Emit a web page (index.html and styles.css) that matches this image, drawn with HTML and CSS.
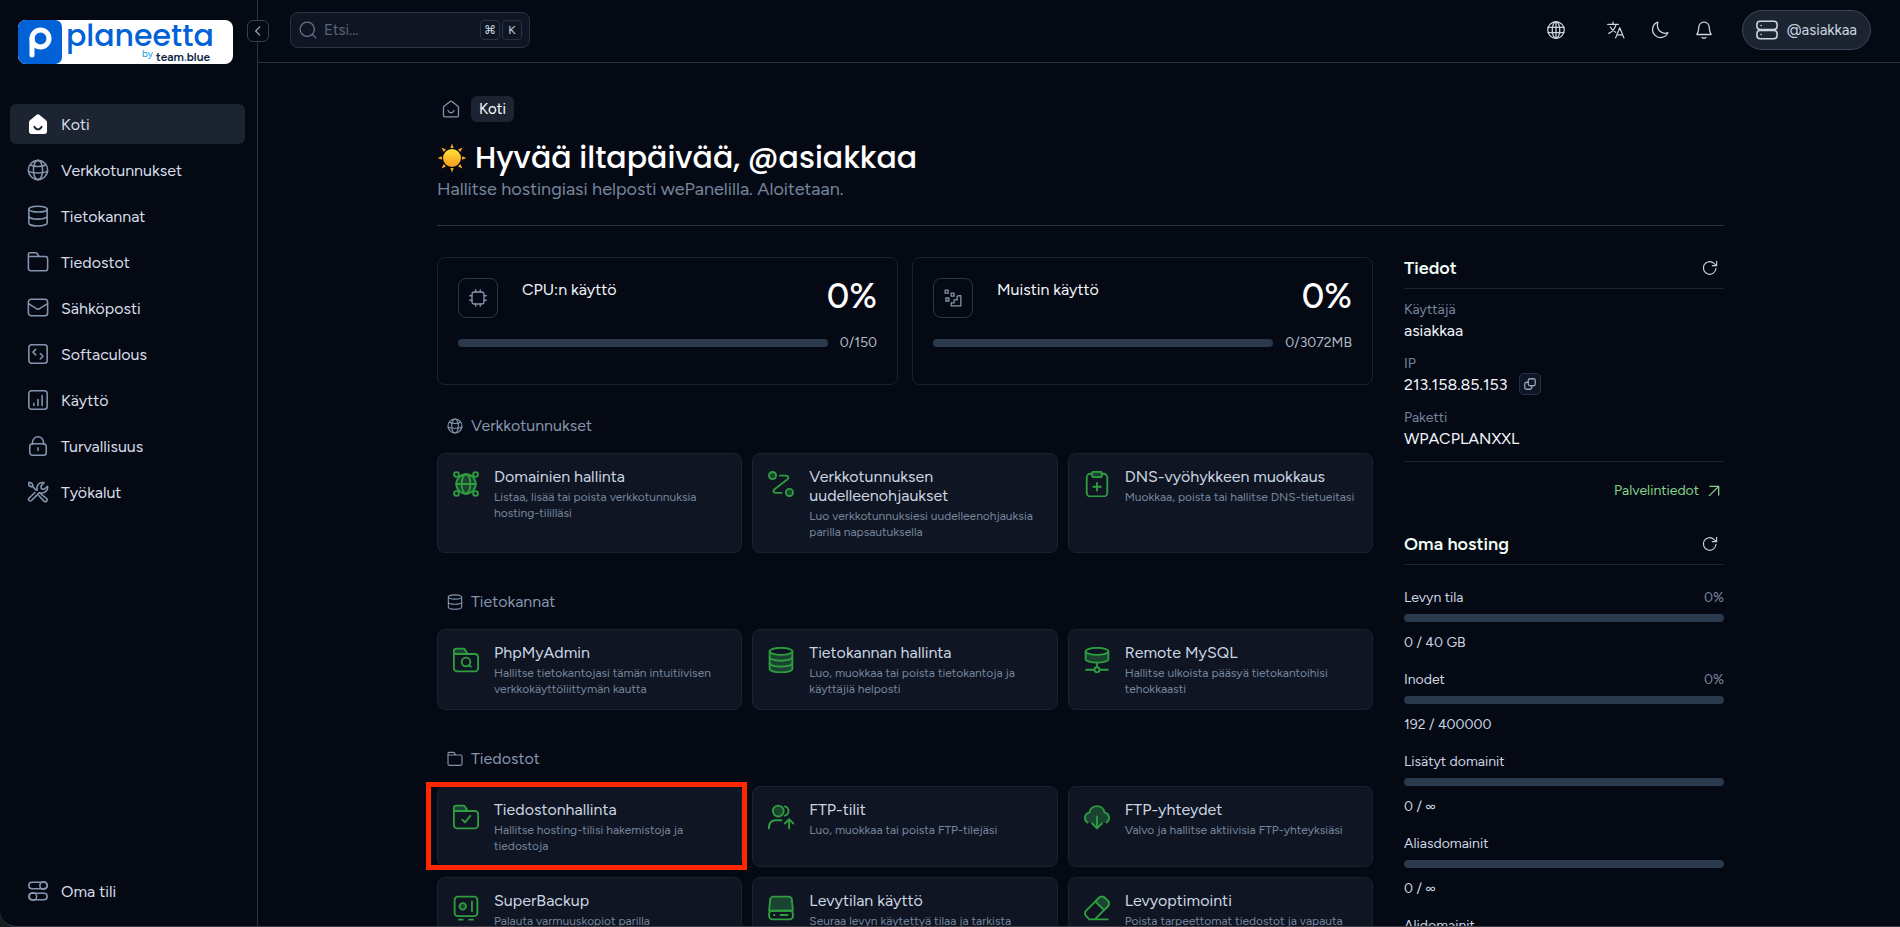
FILE: index.html
```html
<!DOCTYPE html>
<html lang="fi">
<head>
    <meta charset="UTF-8">
    <meta name="viewport" content="width=device-width, initial-scale=1.0">
    <title>Koti - wePanel</title>
    <link rel="stylesheet" href="styles.css">
</head>
<body>

<!-- Kuvakkeet -->
<svg class="sprite" aria-hidden="true">
    <symbol id="i-home" viewBox="0 0 24 24"><path d="M2 10a2 2 0 0 1 .8-1.600l8-6.400a2 2 0 0 1 2.400 0l8 6.400a2 2 0 0 1 .8 1.600V20.500a2 2 0 0 1-2 2H4a2 2 0 0 1-2-2z"/><path d="M8 14c1 2.200 2.500 3 4 3s3-.8 4-3"/></symbol>
    <symbol id="i-home-fill" viewBox="0 0 24 24"><path fill="#fff" stroke="#fff" d="M3 10.200a2 2 0 0 1 .8-1.600l7-5.800a2 2 0 0 1 2.400 0l7 5.800a2 2 0 0 1 .8 1.600V20a2 2 0 0 1-2 2H5a2 2 0 0 1-2-2z"/><path stroke="#1c2431" stroke-width="2" d="M8 15c1 2 2.500 2.800 4 2.800s3-.8 4-2.800"/></symbol>
    <symbol id="i-globe" viewBox="0 0 24 24"><circle cx="12" cy="12" r="10.500"/><ellipse cx="12" cy="12" rx="5" ry="10.500"/><path d="M1.500 13.500c5 2.500 16 2.500 21 0M3.500 6.500c4.500 2.300 12.500 2.300 17 0"/></symbol>
    <symbol id="i-globe2" viewBox="0 0 24 24"><circle cx="12" cy="12" r="11"/><ellipse cx="12" cy="12" rx="5" ry="11"/><path d="M1.500 8.500h21M1.500 15.500h21M12 1v22"/></symbol>
    <symbol id="i-db" viewBox="0 0 24 24"><ellipse cx="12" cy="4.500" rx="10" ry="3.200"/><path d="M2 4.500v15c0 1.900 4.500 3.400 10 3.400s10-1.500 10-3.400v-15M2 12c0 1.900 4.500 3.400 10 3.400S22 13.900 22 12"/></symbol>
    <symbol id="i-folder" viewBox="0 0 24 24"><path d="M1.500 6V3.500a1.500 1.500 0 0 1 1.500-1.500h6.500a2 2 0 0 1 1.600.8L13.200 6H20a2.500 2.500 0 0 1 2.500 2.500v10.500a2.500 2.500 0 0 1-2.500 2.500H4A2.500 2.500 0 0 1 1.500 19zM1.500 6h12"/></symbol>
    <symbol id="i-mail" viewBox="0 0 24 24"><rect x="1.500" y="2.500" width="21" height="18" rx="3"/><path d="M2 7.500l8.300 5.100a3 3 0 0 0 3.400 0L22 7.500"/></symbol>
    <symbol id="i-code" viewBox="0 0 24 24"><rect x="2" y="2" width="20" height="20" rx="3"/><path d="M9.500 7l-3 3 3 3M14.500 11.500l3 3-3 3"/></symbol>
    <symbol id="i-chart" viewBox="0 0 24 24"><rect x="2" y="2" width="20" height="20" rx="3"/><path d="M7.500 15.500v2.500M12 11.500v6.500M16.500 7v11"/></symbol>
    <symbol id="i-lock" viewBox="0 0 24 24"><path d="M6 10V8a6 6 0 0 1 12 0v2"/><rect x="3" y="9.500" width="18" height="12.500" rx="3"/><path d="M12 14v3"/></symbol>
    <symbol id="i-tools" viewBox="0 0 24 24"><path d="M8.500 12.500l-6.300 6.300a1.900 1.900 0 0 0 0 2.500 1.900 1.900 0 0 0 2.700 0l8.600-8.600c3 .9 5.800.2 7.500-1.700a6 6 0 0 0 1.400-5.200l-3.700 3.200-3-.4-.5-3L18.600 2c-2.200-.8-4.600-.2-6.200 1.500-1.600 1.700-2 3.700-1.200 6.200"/><path d="M15 14l6.500 5.300a2 2 0 0 1-2.700 2.900L13 16M10 10L6.300 6.300"/><path d="M2 1.500l3 .6 1.500 3-1.500 1.400-3-1.600z"/></symbol>
    <symbol id="i-toggles" viewBox="0 0 24 24"><rect x="2" y="2.500" width="20" height="7" rx="3.500"/><circle cx="18" cy="6" r="4"/><rect x="2" y="14.500" width="20" height="7" rx="3.500"/><circle cx="6.500" cy="18" r="4"/></symbol>
    <symbol id="i-search" viewBox="0 0 24 24"><circle cx="11" cy="11" r="9.500"/><path d="M18 18l4.500 4.500"/></symbol>
    <symbol id="i-left" viewBox="0 0 24 24"><path d="M15 5l-7 7 7 7"/></symbol>
    <symbol id="i-lang" viewBox="0 0 24 24"><path d="M1 4.500h14M8 1.500v3M12 4.500c-1 5-4.500 9.500-9.500 12M4.500 8c1.500 3 4 5.500 7 7M11.500 22.500l5.500-13.500 5.500 13.500M13.300 18.500h7.400"/></symbol>
    <symbol id="i-moon" viewBox="0 0 24 24"><path d="M9 1.500a10.600 10.600 0 1 0 13.500 14C15 18.500 6.500 12.500 9 1.500z"/></symbol>
    <symbol id="i-bell" viewBox="0 0 24 24"><path d="M5 8.500a7 7 0 0 1 14 0c0 5 1.500 7.500 2.500 9.500h-19C3.500 16 5 13.500 5 8.500zM9.500 22c1.500 1.300 3.500 1.300 5 0"/></symbol>
    <symbol id="i-server" viewBox="0 0 24 24"><rect x="1" y="2.500" width="22" height="9" rx="3.500"/><rect x="1" y="12.500" width="22" height="9" rx="3.500"/><path d="M5.500 7h.2M5.500 17h.2"/></symbol>
    <symbol id="i-cpu" viewBox="0 0 24 24"><rect x="4" y="4" width="16" height="16" rx="3"/><path d="M9 1v3M15 1v3M9 20v3M15 20v3M1 9h3M1 15h3M20 9h3M20 15h3"/></symbol>
    <symbol id="i-mem" viewBox="0 0 24 24"><path d="M1.500 1.500h4v4h-4zM9.500 5.500h4v4h-4zM2.500 12h4v4h-4zM9.500 22.500v-4h4v-4h4v-5l2-.5h3v13.500z"/></symbol>
    <symbol id="i-refresh" viewBox="0 0 24 24"><path d="M21 12.500a9.500 9.500 0 1 1-3-7.500l3.500 3M22 2v6.500h-6.500"/></symbol>
    <symbol id="i-copy" viewBox="0 0 24 24"><rect x="9" y="3" width="12" height="12" rx="3"/><path d="M9 9H6a3 3 0 0 0-3 3v6a3 3 0 0 0 3 3h6a3 3 0 0 0 3-3v-3"/></symbol>
    <symbol id="i-arrow" viewBox="0 0 24 24"><path d="M4 20L20 4M5 4h15v15"/></symbol>

    <symbol id="g-domain" viewBox="0 0 24 24"><circle class="tint" cx="12" cy="12" r="9"/><ellipse cx="12" cy="12" rx="4" ry="9"/><path d="M3 12h18"/><circle class="hole" cx="3.200" cy="3.200" r="2.200"/><circle class="hole" cx="20.800" cy="3.200" r="2.200"/><circle class="hole" cx="3.200" cy="20.800" r="2.200"/><circle class="hole" cx="20.800" cy="20.800" r="2.200"/></symbol>
    <symbol id="g-route" viewBox="0 0 24 24"><circle class="tint" cx="4.200" cy="4.200" r="3.300"/><circle class="tint" cx="19.800" cy="19.800" r="3.300"/><path d="M11 4.200h5.500c2.500 0 3 2.200 1.300 3.600L6 16.800c-1.700 1.400-1.200 3.400 1 3.400h5.500"/></symbol>
    <symbol id="g-clip" viewBox="0 0 24 24"><rect x="2.500" y="2.500" width="19" height="21" rx="3.500"/><rect class="tint" x="7.500" y=".7" width="9" height="5" rx="1.500"/><path d="M12 11v7M8.500 14.500h7"/></symbol>
    <symbol id="g-pma" viewBox="0 0 24 24"><path d="M.8 6.500v13a3 3 0 0 0 3 3h16.400a3 3 0 0 0 3-3v-10a3 3 0 0 0-3-3z"/><path class="tint" d="M.8 6.500v-3a2 2 0 0 1 2-2h6.500a2 2 0 0 1 1.700.9l2.500 4.100z"/><circle cx="12" cy="13.800" r="4"/><path d="M15 16.800l1.500 1.500"/></symbol>
    <symbol id="g-db" viewBox="0 0 24 24"><path class="tint" d="M1.500 4v16c0 1.900 4.500 3.400 10.500 3.400S22.500 21.900 22.500 20V4"/><ellipse class="hole" cx="12" cy="4" rx="10.500" ry="3.200"/><path d="M1.500 9.300c0 1.900 4.500 3.400 10.500 3.400s10.500-1.500 10.500-3.400M1.500 14.700c0 1.900 4.500 3.400 10.500 3.400s10.500-1.500 10.500-3.400"/></symbol>
    <symbol id="g-remote" viewBox="0 0 24 24"><path class="tint" d="M1.500 4v7c0 1.900 4.500 3.400 10.500 3.400s10.500-1.500 10.500-3.400V4"/><ellipse class="hole" cx="12" cy="4" rx="10.500" ry="3.200"/><path d="M12 14.500v4M2 21h7.500M14.500 21H22"/><circle cx="12" cy="21" r="2.300"/></symbol>
    <symbol id="g-files" viewBox="0 0 24 24"><path d="M.8 6.500v13a3 3 0 0 0 3 3h16.400a3 3 0 0 0 3-3v-10a3 3 0 0 0-3-3z"/><path class="tint" d="M.8 6.500v-3a2 2 0 0 1 2-2h6.500a2 2 0 0 1 1.700.9l2.500 4.100z"/><path d="M8.500 14.500l2.500 2.500 5-6"/></symbol>
    <symbol id="g-users" viewBox="0 0 24 24"><circle class="tint" cx="9.500" cy="6.500" r="5"/><path d="M15.500 2.200c4.500 1 4.500 7.600 0 8.600M.8 22.500c0-5 1.500-7.500 6.200-7.500h5.500M19.500 22.500v-7.500M15.500 18l4-4 4 4"/></symbol>
    <symbol id="g-cloud" viewBox="0 0 24 24"><path class="tint" d="M3 17C-.5 14.500.5 8.500 5 8c1-8 13-8 14 0 4.500.5 5.500 6.500 2 9l-5 1-4 4.500L8 18z" stroke="none"/><path d="M3 17C-.5 14.500.5 8.500 5 8c1-8 13-8 14 0 4.500.5 5.500 6.500 2 9M12 11.500v11M7.500 18l4.500 4.500 4.500-4.500"/></symbol>
    <symbol id="g-safe" viewBox="0 0 24 24"><rect x="1.500" y="1.500" width="21" height="18" rx="3"/><circle class="tint" cx="9" cy="10.500" r="3"/><path d="M17.500 6v9M5.500 22.800h3.500M15 22.800h3.500"/></symbol>
    <symbol id="g-disk" viewBox="0 0 24 24"><path class="tint" d="M1 14.500L2 4.500a3 3 0 0 1 3-3h14a3 3 0 0 1 3 3l1 10z"/><rect x="1" y="14.500" width="22" height="8" rx="3"/><path d="M5.500 18.500h.5M11.500 18.500h6.500"/></symbol>
    <symbol id="g-eraser" viewBox="0 0 24 24"><path d="M5 22.500l-3-3a3.500 3.500 0 0 1 0-5L14 2.500a3.500 3.500 0 0 1 5 0l3 3a3.500 3.500 0 0 1 0 5L10 22.500zM5 22.500h17"/><path class="tint" d="M10.500 6L14 2.500a3.500 3.500 0 0 1 5 0l3 3a3.500 3.500 0 0 1 0 5L18.500 14z"/></symbol>
</svg>

<div class="app">

    <aside class="sidebar">
        <a class="logo" href="#" aria-label="planeetta by team.blue">
            <svg viewBox="0 0 215 44" width="215" height="44">
                <rect width="44" height="44" rx="7" fill="#0062d6"/>
                <circle cx="22.500" cy="18.500" r="8.500" fill="none" stroke="#fff" stroke-width="5"/>
                <path d="M14 18v17" stroke="#fff" stroke-width="5" stroke-linecap="round"/>
                <text class="logo-name" x="48" y="26">planeetta</text>
                <text class="logo-by" x="124" y="37">by</text>
                <text class="logo-team" x="138" y="41">team<tspan fill="#00a0e0">.</tspan>blue</text>
            </svg>
        </a>
        <button class="collapse" type="button" aria-label="Pienennä valikko"><svg class="icon icon-xs"><use href="#i-left"/></svg></button>

        <nav class="menu">
            <a class="menu-item active" href="#"><svg class="icon"><use href="#i-home-fill"/></svg>Koti</a>
            <a class="menu-item" href="#"><svg class="icon"><use href="#i-globe"/></svg>Verkkotunnukset</a>
            <a class="menu-item" href="#"><svg class="icon"><use href="#i-db"/></svg>Tietokannat</a>
            <a class="menu-item" href="#"><svg class="icon"><use href="#i-folder"/></svg>Tiedostot</a>
            <a class="menu-item" href="#"><svg class="icon"><use href="#i-mail"/></svg>Sähköposti</a>
            <a class="menu-item" href="#"><svg class="icon"><use href="#i-code"/></svg>Softaculous</a>
            <a class="menu-item" href="#"><svg class="icon"><use href="#i-chart"/></svg>Käyttö</a>
            <a class="menu-item" href="#"><svg class="icon"><use href="#i-lock"/></svg>Turvallisuus</a>
            <a class="menu-item" href="#"><svg class="icon"><use href="#i-tools"/></svg>Työkalut</a>
            <a class="menu-item account" href="#"><svg class="icon"><use href="#i-toggles"/></svg>Oma tili</a>
        </nav>
    </aside>

    <div class="page">
        <header class="topbar">
            <label class="search">
                <svg class="icon icon-md"><use href="#i-search"/></svg>
                <input type="text" placeholder="Etsi..." aria-label="Etsi">
                <kbd>⌘</kbd><kbd>K</kbd>
            </label>
            <div class="actions">
                <button class="action globe" type="button" aria-label="Sivusto"><svg class="icon icon-md"><use href="#i-globe2"/></svg></button>
                <button class="action" type="button" aria-label="Kieli"><svg class="icon icon-md"><use href="#i-lang"/></svg></button>
                <button class="action" type="button" aria-label="Tumma tila"><svg class="icon icon-md"><use href="#i-moon"/></svg></button>
                <button class="action" type="button" aria-label="Ilmoitukset"><svg class="icon icon-md"><use href="#i-bell"/></svg></button>
                <button class="user" type="button"><svg class="icon"><use href="#i-server"/></svg>@asiakkaa</button>
            </div>
        </header>

        <main class="main">
            <div class="container">
                <div class="breadcrumb">
                    <a href="#" aria-label="Etusivu"><svg class="icon icon-md"><use href="#i-home"/></svg></a>
                    <span class="crumb">Koti</span>
                </div>

                <div class="welcome">
                    <h1>
                        <svg class="sun" viewBox="0 0 30 30">
                            <defs><linearGradient id="sun" x1="0" y1="0" x2="0" y2="1"><stop offset="0" stop-color="#ffe23c"/><stop offset="1" stop-color="#f9971c"/></linearGradient></defs>
                            <path fill="#f5a81c" d="M15 .5l1.700 4.500h-3.400zM15 29.500l1.700-4.500h-3.400zM.5 15l4.500-1.700v3.400zM29.500 15l-4.500-1.700v3.400zM4.600 4.600l4.400 2-2.400 2.400zM25.400 4.600l-2 4.400-2.400-2.400zM4.600 25.400l2-4.400 2.400 2.400zM25.400 25.400l-4.400-2 2.400-2.400z"/>
                            <circle cx="15" cy="15" r="9" fill="url(#sun)"/>
                        </svg>
                        Hyvää iltapäivää, @asiakkaa
                    </h1>
                    <p>Hallitse hostingiasi helposti wePanelilla. Aloitetaan.</p>
                </div>

                <div class="columns">
                    <div class="content">
                        <div class="stats">
                            <div class="stat">
                                <div class="stat-head">
                                    <span class="stat-icon"><svg class="icon icon-md"><use href="#i-cpu"/></svg></span>
                                    <span class="stat-name">CPU:n käyttö</span>
                                    <span class="stat-value">0%</span>
                                </div>
                                <div class="stat-foot"><div class="bar"></div><span>0/150</span></div>
                            </div>
                            <div class="stat">
                                <div class="stat-head">
                                    <span class="stat-icon"><svg class="icon icon-md"><use href="#i-mem"/></svg></span>
                                    <span class="stat-name">Muistin käyttö</span>
                                    <span class="stat-value">0%</span>
                                </div>
                                <div class="stat-foot"><div class="bar"></div><span>0/3072MB</span></div>
                            </div>
                        </div>

                        <section class="group">
                            <h2><svg class="icon icon-sm"><use href="#i-globe"/></svg>Verkkotunnukset</h2>
                            <div class="cards">
                                <a class="card" href="#">
                                    <svg class="icon green"><use href="#g-domain"/></svg>
                                    <div><h3>Domainien hallinta</h3><p>Listaa, lisää tai poista verkkotunnuksia hosting-tililläsi</p></div>
                                </a>
                                <a class="card" href="#">
                                    <svg class="icon green"><use href="#g-route"/></svg>
                                    <div><h3>Verkkotunnuksen uudelleenohjaukset</h3><p>Luo verkkotunnuksiesi uudelleenohjauksia parilla napsautuksella</p></div>
                                </a>
                                <a class="card" href="#">
                                    <svg class="icon green"><use href="#g-clip"/></svg>
                                    <div><h3>DNS-vyöhykkeen muokkaus</h3><p>Muokkaa, poista tai hallitse DNS-tietueitasi</p></div>
                                </a>
                            </div>
                        </section>

                        <section class="group">
                            <h2><svg class="icon icon-sm"><use href="#i-db"/></svg>Tietokannat</h2>
                            <div class="cards">
                                <a class="card" href="#">
                                    <svg class="icon green"><use href="#g-pma"/></svg>
                                    <div><h3>PhpMyAdmin</h3><p>Hallitse tietokantojasi tämän intuitiivisen verkkokäyttöliittymän kautta</p></div>
                                </a>
                                <a class="card" href="#">
                                    <svg class="icon green"><use href="#g-db"/></svg>
                                    <div><h3>Tietokannan hallinta</h3><p>Luo, muokkaa tai poista tietokantoja ja käyttäjiä helposti</p></div>
                                </a>
                                <a class="card" href="#">
                                    <svg class="icon green"><use href="#g-remote"/></svg>
                                    <div><h3>Remote MySQL</h3><p>Hallitse ulkoista pääsyä tietokantoihisi tehokkaasti</p></div>
                                </a>
                            </div>
                        </section>

                        <section class="group">
                            <h2><svg class="icon icon-sm"><use href="#i-folder"/></svg>Tiedostot</h2>
                            <div class="cards">
                                <a class="card highlight" href="#">
                                    <svg class="icon green"><use href="#g-files"/></svg>
                                    <div><h3>Tiedostonhallinta</h3><p>Hallitse hosting-tilisi hakemistoja ja tiedostoja</p></div>
                                </a>
                                <a class="card" href="#">
                                    <svg class="icon green"><use href="#g-users"/></svg>
                                    <div><h3>FTP-tilit</h3><p>Luo, muokkaa tai poista FTP-tilejäsi</p></div>
                                </a>
                                <a class="card" href="#">
                                    <svg class="icon green"><use href="#g-cloud"/></svg>
                                    <div><h3>FTP-yhteydet</h3><p>Valvo ja hallitse aktiivisia FTP-yhteyksiäsi</p></div>
                                </a>
                                <a class="card" href="#">
                                    <svg class="icon green"><use href="#g-safe"/></svg>
                                    <div><h3>SuperBackup</h3><p>Palauta varmuuskopiot parilla</p></div>
                                </a>
                                <a class="card" href="#">
                                    <svg class="icon green"><use href="#g-disk"/></svg>
                                    <div><h3>Levytilan käyttö</h3><p>Seuraa levyn käytettyä tilaa ja tarkista</p></div>
                                </a>
                                <a class="card" href="#">
                                    <svg class="icon green"><use href="#g-eraser"/></svg>
                                    <div><h3>Levyoptimointi</h3><p>Poista tarpeettomat tiedostot ja vapauta</p></div>
                                </a>
                            </div>
                        </section>
                    </div>

                    <div class="panel">
                        <div class="panel-head">
                            <h2>Tiedot</h2>
                            <button type="button" aria-label="Päivitä"><svg class="icon icon-sm"><use href="#i-refresh"/></svg></button>
                        </div>
                        <dl class="info">
                            <dt>Käyttäjä</dt>
                            <dd>asiakkaa</dd>
                            <dt>IP</dt>
                            <dd>213.158.85.153 <button class="copy" type="button" aria-label="Kopioi"><svg class="icon icon-xs"><use href="#i-copy"/></svg></button></dd>
                            <dt>Paketti</dt>
                            <dd>WPACPLANXXL</dd>
                        </dl>
                        <a class="server-link" href="#">Palvelintiedot <svg class="icon icon-xs"><use href="#i-arrow"/></svg></a>

                        <div class="panel-head">
                            <h2>Oma hosting</h2>
                            <button type="button" aria-label="Päivitä"><svg class="icon icon-sm"><use href="#i-refresh"/></svg></button>
                        </div>
                        <div class="usage">
                            <div class="usage-head"><span>Levyn tila</span><span class="muted">0%</span></div>
                            <div class="bar"></div>
                            <p>0 / 40 GB</p>
                        </div>
                        <div class="usage">
                            <div class="usage-head"><span>Inodet</span><span class="muted">0%</span></div>
                            <div class="bar"></div>
                            <p>192 / 400000</p>
                        </div>
                        <div class="usage">
                            <div class="usage-head"><span>Lisätyt domainit</span></div>
                            <div class="bar"></div>
                            <p>0 / ∞</p>
                        </div>
                        <div class="usage">
                            <div class="usage-head"><span>Aliasdomainit</span></div>
                            <div class="bar"></div>
                            <p>0 / ∞</p>
                        </div>
                        <div class="usage">
                            <div class="usage-head"><span>Alidomainit</span></div>
                            <div class="bar"></div>
                        </div>
                    </div>
                </div>
            </div>
        </main>
    </div>
</div>

</body>
</html>
```
FILE: styles.css
```css
* {
    box-sizing: border-box;
    margin: 0;
    padding: 0;
}

body {
    font-family: Figtree, Lato, sans-serif;
    font-size: 16px;
    color: #cbd5e1;
    background-color: #16211f;
}

a {
    color: inherit;
    text-decoration: none;
}

button {
    font: inherit;
    color: inherit;
    background: none;
    border: none;
    cursor: pointer;
}

/* Kuvakkeet */
.sprite {
    display: none;
}

.icon {
    width: 22px;
    height: 22px;
    flex-shrink: 0;
    fill: none;
    stroke: currentColor;
    stroke-width: 1.7;
    stroke-linecap: round;
    stroke-linejoin: round;
    overflow: visible;
}

.icon-xs {
    width: 14px;
    height: 14px;
    stroke-width: 2.2;
}

.icon-sm {
    width: 16px;
    height: 16px;
}

.icon-md {
    width: 18px;
    height: 18px;
}

.green {
    width: 26px;
    height: 26px;
    color: #2f9e3f;
}

.tint {
    fill: #1b4332;
}

.hole {
    fill: #0f1523;
}

.app {
    display: flex;
    height: 100vh;
    background-color: #050914;
    border-bottom: 1px solid #3b3d47;
    border-bottom-left-radius: 16px;
    overflow: hidden;
}

/* Sivupalkki */
.sidebar {
    position: relative;
    display: flex;
    flex-direction: column;
    flex-shrink: 0;
    width: 258px;
    padding: 20px 12px 15px 10px;
    border-right: 1px solid #2b3444;
}

.logo {
    display: flex;
    align-self: flex-start;
    margin-left: 8px;
    background-color: #fff;
    border-radius: 8px;
    overflow: hidden;
}

.logo-name {
    font-family: Poppins, Figtree, sans-serif;
    font-size: 30px;
    font-weight: 500;
    fill: #0062d6;
}

.logo-by {
    font-size: 10px;
    fill: #00a0e0;
}

.logo-team {
    font-size: 12px;
    font-weight: 600;
    fill: #0b2540;
}

.collapse {
    position: absolute;
    top: 20px;
    right: -12px;
    display: flex;
    align-items: center;
    justify-content: center;
    width: 22px;
    height: 22px;
    color: #94a3b8;
    background-color: #050914;
    border: 1px solid #334155;
    border-radius: 6px;
    z-index: 2;
}

.menu {
    display: flex;
    flex-direction: column;
    flex-grow: 1;
    gap: 6px;
    margin-top: 40px;
}

.menu-item {
    display: flex;
    align-items: center;
    gap: 12px;
    height: 40px;
    padding: 0 17px;
    border-radius: 6px;
    color: #d7dee8;
}

.menu-item .icon {
    color: #8495ad;
}

.menu-item.active {
    background-color: #1c2431;
}

.menu-item.account {
    margin-top: auto;
}

/* Yläpalkki */
.page {
    display: flex;
    flex-direction: column;
    flex-grow: 1;
    min-width: 0;
}

.topbar {
    display: flex;
    flex-shrink: 0;
    align-items: center;
    justify-content: space-between;
    height: 63px;
    padding: 0 29px 2px 32px;
    border-bottom: 1px solid #2b3444;
}

.search {
    display: flex;
    align-items: center;
    gap: 2px;
    width: 240px;
    height: 36px;
    padding: 0 7px 0 8px;
    color: #64748b;
    background-color: #0f1523;
    border: 1px solid #273244;
    border-radius: 8px;
}

.search input {
    flex-grow: 1;
    min-width: 0;
    margin-left: 5px;
    font: inherit;
    font-size: 15px;
    color: #cbd5e1;
    background: none;
    border: none;
    outline: none;
}

.search input::placeholder {
    color: #56657a;
}

.search kbd {
    flex-shrink: 0;
    width: 20px;
    height: 20px;
    font-family: Figtree, Lato, "DejaVu Sans", sans-serif;
    font-size: 12px;
    line-height: 18px;
    text-align: center;
    color: #cbd5e1;
    border: 1px solid #273244;
    border-radius: 4px;
}

.actions {
    display: flex;
    align-items: center;
    gap: 8px;
}

.action {
    display: flex;
    align-items: center;
    justify-content: center;
    width: 36px;
    height: 36px;
}

.globe {
    margin-right: 16px;
}

.user {
    display: flex;
    align-items: center;
    gap: 9px;
    height: 40px;
    margin-left: 12px;
    padding: 0 13px;
    font-size: 15px;
    background-color: #1c2431;
    border: 1px solid #3b4658;
    border-radius: 20px;
}

/* Sisältö */
.main {
    flex-grow: 1;
    min-height: 0;
    padding: 33px 24px 0 27px;
    overflow-y: auto;
    scrollbar-width: none;
}

.container {
    max-width: 1287px;
    margin: 0 auto;
}

.breadcrumb {
    display: flex;
    align-items: center;
    gap: 11px;
    padding-left: 5px;
    color: #8495ad;
}

.breadcrumb a {
    display: flex;
}

.crumb {
    padding: 0 8px;
    font-size: 15px;
    line-height: 26px;
    color: #fff;
    background-color: #1c2431;
    border-radius: 6px;
}

.welcome {
    padding: 18px 0 23px;
    border-bottom: 1px solid #2b3444;
}

.welcome h1 {
    display: flex;
    align-items: center;
    gap: 8px;
    font-family: Poppins, Inter, sans-serif;
    font-size: 30px;
    font-weight: 500;
    line-height: 36px;
    color: #fff;
}

.sun {
    width: 30px;
    height: 30px;
}

.welcome p {
    font-size: 18px;
    line-height: 26px;
    color: #75859c;
}

.columns {
    display: flex;
    gap: 31px;
    margin-top: 31px;
}

.content {
    flex-grow: 1;
    min-width: 0;
}

.stats {
    display: grid;
    grid-template-columns: 1fr 1fr;
    gap: 14px;
}

.stat {
    height: 128px;
    padding: 20px;
    border: 1px solid #1a2130;
    border-radius: 8px;
}

.stat-head {
    display: flex;
    align-items: flex-start;
}

.stat-icon {
    display: flex;
    align-items: center;
    justify-content: center;
    width: 40px;
    height: 40px;
    margin-right: 24px;
    color: #8495ad;
    border: 1px solid #2b3648;
    border-radius: 8px;
}

.stat-name {
    flex-grow: 1;
    line-height: 24px;
    color: #f1f5f9;
}

.stat-value {
    font-size: 35px;
    font-weight: 500;
    line-height: 36px;
    color: #fff;
}

.stat-foot {
    display: flex;
    align-items: center;
    gap: 12px;
    margin-top: 15px;
    font-size: 14px;
    line-height: 20px;
    color: #b0bac8;
}

.bar {
    flex-grow: 1;
    height: 8px;
    background-color: #2b394c;
    border-radius: 4px;
}

.group h2 {
    display: flex;
    align-items: center;
    gap: 8px;
    margin: 37px 0 15px;
    padding-left: 10px;
    font-size: 16px;
    font-weight: normal;
    line-height: 24px;
    color: #8495ad;
}

.stats + .group h2 {
    margin-top: 29px;
}

.cards {
    display: grid;
    grid-template-columns: repeat(3, 1fr);
    gap: 10px;
}

.card {
    position: relative;
    display: flex;
    gap: 15px;
    padding: 13px 15px 12px;
    background-color: #0f1523;
    border: 1px solid #1a2231;
    border-radius: 8px;
}

.card .icon {
    margin-top: 4px;
}

.card h3 {
    font-size: 16px;
    font-weight: normal;
    line-height: 19px;
}

.card p {
    margin-top: 3px;
    font-size: 12px;
    line-height: 16px;
    color: #75859c;
}

.highlight::after {
    content: "";
    position: absolute;
    inset: -5px -6px -4px -12px;
    border: 5px solid #ff2600;
}

/* Oikea palsta */
.panel {
    flex-shrink: 0;
    width: 320px;
    font-size: 14px;
}

.panel-head {
    display: flex;
    align-items: center;
    justify-content: space-between;
    padding: 0 6px 9px 0;
    border-bottom: 1px solid #1c2534;
}

.panel-head h2 {
    font-size: 18px;
    font-weight: 600;
    line-height: 22px;
    color: #f0fdf4;
}

.panel-head button {
    display: flex;
}

.info {
    padding: 12px 0;
    border-bottom: 1px solid #1c2534;
}

.info dt {
    line-height: 18px;
    color: #75859c;
}

.info dd + dt {
    margin-top: 14px;
}

.info dd {
    display: flex;
    align-items: center;
    gap: 12px;
    height: 22px;
    font-size: 16px;
    color: #f1f5f9;
}

.copy {
    display: flex;
    align-items: center;
    justify-content: center;
    width: 22px;
    height: 22px;
    color: #94a3b8;
    background-color: #0f1523;
    border: 1px solid #273244;
    border-radius: 5px;
}

.server-link {
    display: flex;
    align-items: center;
    justify-content: flex-end;
    gap: 8px;
    margin: 19px 0 32px;
    padding-right: 3px;
    line-height: 20px;
    color: #86d189;
}

.usage {
    margin-top: 17px;
    line-height: 20px;
}

.panel-head + .usage {
    margin-top: 23px;
}

.usage-head {
    display: flex;
    justify-content: space-between;
    margin-bottom: 6px;
}

.usage p {
    margin-top: 11px;
}

.muted {
    color: #75859c;
}
```
